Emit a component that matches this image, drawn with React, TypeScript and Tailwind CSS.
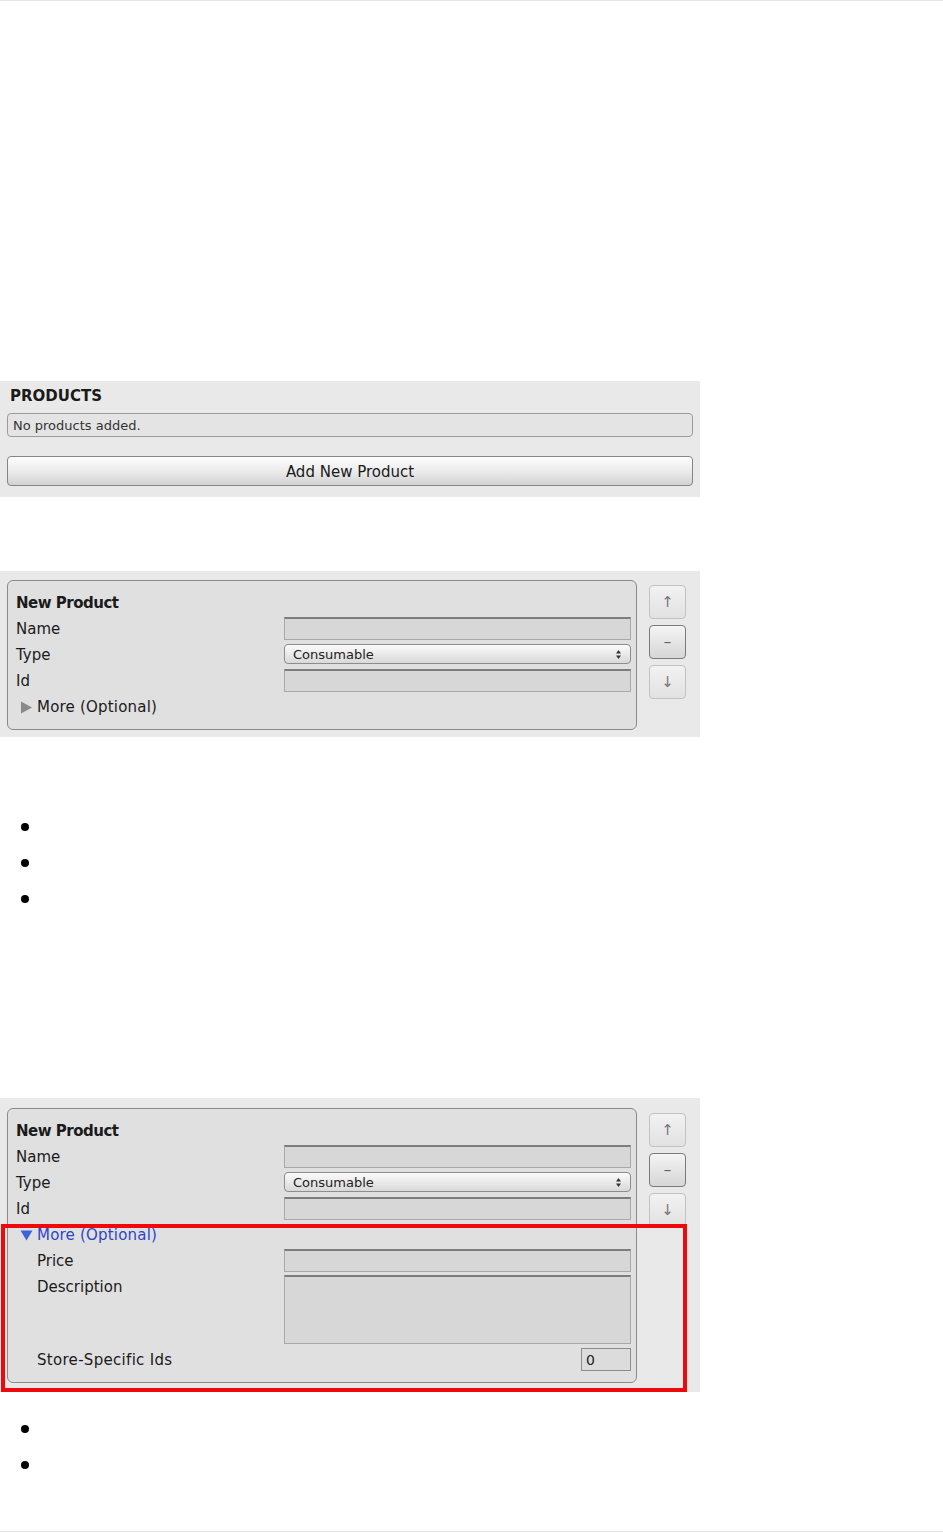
import React from 'react';

const font = { fontFamily: '"DejaVu Sans", "Liberation Sans", sans-serif' };

// --- Small controls ---

const TextField = ({ h = 'h-[23px]', className = '' }: { h?: string; className?: string }) => (
  <div className={`${h} ${className} bg-[#d7d7d7] border border-[#a9a9a9] border-t-[#7d7d7d] border-t-2`} />
);

const Popup = ({ value }: { value: string }) => (
  <div className="h-[20px] flex items-center justify-between px-2 rounded-[4px] border border-[#8d8d8d] bg-gradient-to-b from-[#fbfbfb] to-[#d9d9d9] text-[13px] text-[#222]">
    <span className="pt-[1px]">{value}</span>
    <svg width="7" height="11" viewBox="0 0 7 11">
      <path d="M3.5 1 L6 4.5 H1 Z" fill="#333" />
      <path d="M3.5 10 L6 6.5 H1 Z" fill="#333" />
    </svg>
  </div>
);

const SideButton = ({ label, strong }: { label: string; strong?: boolean }) => (
  <div
    className={`w-[37px] h-[34px] rounded-[4px] flex items-center justify-center text-[15px] ${
      strong
        ? 'border border-[#7a7a7a] bg-gradient-to-b from-[#f4f4f4] to-[#d6d6d6] text-[#666]'
        : 'border border-[#c2c2c2] bg-gradient-to-b from-[#f2f2f2] to-[#e2e2e2] text-[#777]'
    }`}
  >
    {label}
  </div>
);

const Row = ({ label, indent, children }: { label: React.ReactNode; indent?: boolean; children?: React.ReactNode }) => (
  <div className="flex items-center min-h-[26px]">
    <div className={`w-[268px] shrink-0 pt-[2px] text-[15px] text-[#1b1b1b] ${indent ? 'pl-[21px]' : ''}`}>{label}</div>
    <div className="flex-1">{children}</div>
  </div>
);

const Bullet = () => (
  <div className="h-[36px] flex items-center pl-[21px] pt-[2px]">
    <span className="w-[8px] h-[8px] rounded-full bg-black" />
  </div>
);

// --- Panels ---

const ProductPanel = ({ expanded }: { expanded?: boolean }) => (
  <div className="flex gap-[12px] items-start">
    <div className="w-[630px] ml-[7px] border border-[#8b8b8b] rounded-[6px] bg-[#e0e0e0] pl-[8px] pr-[5px] pt-[8px] pb-[10px]">
      <Row label={<span className="font-bold tracking-[-0.5px]">New Product</span>} />
      <Row label="Name"><TextField /></Row>
      <Row label="Type"><Popup value="Consumable" /></Row>
      <Row label="Id"><TextField /></Row>
      <div className="h-[26px] flex items-center gap-[4px] pl-[4px] pt-[2px] text-[15px] tracking-[0.2px]">
        {expanded ? (
          <>
            <svg width="13" height="11" viewBox="0 0 13 11"><path d="M0.5 0.5 H12.5 L6.5 10.5 Z" fill="#3d62dd" /></svg>
            <span className="text-[#2f45c9]">More (Optional)</span>
          </>
        ) : (
          <>
            <svg width="13" height="13" viewBox="0 0 13 13"><path d="M1 0.5 L12 6.5 L1 12.5 Z" fill="#8a8a8a" /></svg>
            <span className="text-[#1b1b1b]">More (Optional)</span>
          </>
        )}
      </div>
      {expanded && (
        <>
          <Row label="Price" indent><TextField /></Row>
          <div className="flex items-start pt-[2px] pb-[2px]">
            <div className="w-[268px] shrink-0 text-[15px] text-[#1b1b1b] pl-[21px] pt-[1px] leading-[22px]">Description</div>
            <TextField h="h-[69px]" className="flex-1" />
          </div>
          <Row label={<span className="tracking-[0.3px]">Store-Specific Ids</span>} indent>
            <div className="flex justify-end">
              <div className="w-[50px] h-[23px] bg-[#dcdcdc] border border-[#8d8d8d] text-[14px] leading-[22px] pl-[4px] text-[#222]">0</div>
            </div>
          </Row>
        </>
      )}
    </div>
    <div className="flex flex-col gap-[6px] pt-[5px]">
      <SideButton label="↑" />
      <SideButton label="–" strong />
      <SideButton label="↓" />
    </div>
  </div>
);

export default function App() {
  return (
    <div style={font} className="bg-white w-[943px] h-[1532px] border-t border-b border-[#e6e6e6] flex flex-col">
      {/* Products list screenshot */}
      <div className="mt-[380px] w-[700px] h-[116px] bg-[#e9e9e9] pt-[6px]">
        <div className="pl-[10px] text-[15px] font-bold text-[#1a1a1a] leading-[18px]">PRODUCTS</div>
        <div className="mx-[7px] mt-[8px] h-[24px] rounded-[4px] border border-[#9c9c9c] bg-[#e4e4e4] text-[13px] text-[#333] pl-[5px] pt-[1px] leading-[22px]">
          No products added.
        </div>
        <div className="mx-[7px] mt-[19px] h-[30px] rounded-[4px] border border-[#858585] bg-gradient-to-b from-[#fdfdfd] via-[#ececec] to-[#d2d2d2] text-[15px] text-[#1a1a1a] flex items-center justify-center pt-[2px]">
          Add New Product
        </div>
      </div>

      {/* Collapsed product */}
      <div className="mt-[74px] w-[700px] h-[166px] bg-[#e9e9e9] pt-[9px]">
        <ProductPanel />
      </div>

      <div className="mt-[71px]">
        <Bullet />
        <Bullet />
        <Bullet />
      </div>

      {/* Expanded product */}
      <div className="mt-[182px] relative w-[700px] h-[294px] bg-[#e9e9e9] pt-[10px]">
        <ProductPanel expanded />
        <div className="absolute left-[1px] top-[126px] w-[686px] h-[168px] border-[4px] border-[#ee0a0a]" />
      </div>

      <div className="mt-[18px]">
        <Bullet />
        <Bullet />
      </div>
    </div>
  );
}
